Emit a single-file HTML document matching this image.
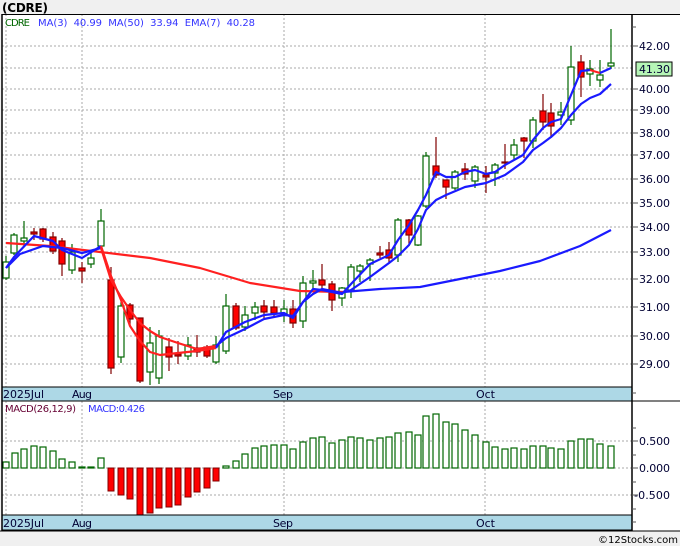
<!DOCTYPE html>
<html><head><meta charset="utf-8"><style>
body{margin:0;background:#f0f0f0;width:680px;height:546px;overflow:hidden;font-family:"DejaVu Sans","Liberation Sans",sans-serif}
svg{position:absolute;left:0;top:0}
</style></head><body>
<svg width="680" height="546" xmlns="http://www.w3.org/2000/svg" font-family="DejaVu Sans, Liberation Sans, sans-serif">
<rect x="0" y="0" width="680" height="546" fill="#f0f0f0"/>
<text x="2" y="12" font-size="12" font-weight="bold" fill="#000" textLength="46">(CDRE)</text>
<rect x="2" y="14" width="678" height="517" fill="#fff"/>
<g stroke="#aaa" stroke-dasharray="2,2" stroke-width="1">
<line x1="6" y1="14" x2="6" y2="387"/><line x1="82" y1="14" x2="82" y2="387"/><line x1="284" y1="14" x2="284" y2="387"/><line x1="485" y1="14" x2="485" y2="387"/>
<line x1="6" y1="401" x2="6" y2="515"/><line x1="82" y1="401" x2="82" y2="515"/><line x1="284" y1="401" x2="284" y2="515"/><line x1="485" y1="401" x2="485" y2="515"/>
<line x1="2" y1="46" x2="632" y2="46"/><line x1="2" y1="68" x2="632" y2="68"/><line x1="2" y1="89" x2="632" y2="89"/><line x1="2" y1="110" x2="632" y2="110"/><line x1="2" y1="133" x2="632" y2="133"/><line x1="2" y1="155" x2="632" y2="155"/><line x1="2" y1="179" x2="632" y2="179"/><line x1="2" y1="203" x2="632" y2="203"/><line x1="2" y1="227" x2="632" y2="227"/><line x1="2" y1="252" x2="632" y2="252"/><line x1="2" y1="279" x2="632" y2="279"/><line x1="2" y1="307" x2="632" y2="307"/><line x1="2" y1="336" x2="632" y2="336"/><line x1="2" y1="364" x2="632" y2="364"/>
<line x1="2" y1="441" x2="632" y2="441"/><line x1="2" y1="468" x2="632" y2="468"/><line x1="2" y1="495" x2="632" y2="495"/>
</g>
<text x="5" y="26" font-size="10" fill="#006600" textLength="25">CDRE</text>
<text x="38" y="26" font-size="10" fill="#3333ff" xml:space="preserve" textLength="217">MA(3)  40.99  MA(50)  33.94  EMA(7)  40.28</text>
<g stroke-width="1.2">
<g stroke="#006600" fill="#fff">
<line x1="6" y1="256" x2="6" y2="280"/><rect x="3" y="262" width="6" height="16"/>
<line x1="14" y1="233" x2="14" y2="255"/><rect x="11" y="235" width="6" height="18"/>
<line x1="24" y1="221" x2="24" y2="246"/><rect x="21" y="238" width="6" height="3"/>
<line x1="72" y1="244" x2="72" y2="274"/><rect x="69" y="252" width="6" height="18"/>
<line x1="91" y1="250" x2="91" y2="268"/><rect x="88" y="258" width="6" height="6"/>
<line x1="101" y1="209" x2="101" y2="248"/><rect x="98" y="221" width="6" height="25"/>
<line x1="121" y1="302" x2="121" y2="363"/><rect x="118" y="306" width="6" height="51"/>
<line x1="150" y1="327" x2="150" y2="385"/><rect x="147" y="343" width="6" height="29"/>
<line x1="159" y1="330" x2="159" y2="384"/><rect x="156" y="336" width="6" height="42"/>
<line x1="188" y1="337" x2="188" y2="360"/><rect x="185" y="345" width="6" height="11"/>
<line x1="216" y1="336" x2="216" y2="364"/><rect x="213" y="345" width="6" height="17"/>
<line x1="226" y1="294" x2="226" y2="354"/><rect x="223" y="306" width="6" height="45"/>
<line x1="245" y1="306" x2="245" y2="331"/><rect x="242" y="315" width="6" height="12"/>
<line x1="255" y1="302" x2="255" y2="320"/><rect x="252" y="307" width="6" height="6"/>
<line x1="284" y1="300" x2="284" y2="322"/><rect x="281" y="309" width="6" height="5"/>
<line x1="303" y1="276" x2="303" y2="328"/><rect x="300" y="283" width="6" height="38"/>
<line x1="313" y1="270" x2="313" y2="290"/><rect x="310" y="281" width="6" height="2"/>
<line x1="342" y1="287" x2="342" y2="306"/><rect x="339" y="288" width="6" height="10"/>
<line x1="351" y1="264" x2="351" y2="298"/><rect x="348" y="267" width="6" height="24"/>
<line x1="360" y1="264" x2="360" y2="282"/><rect x="357" y="266" width="6" height="5"/>
<line x1="370" y1="258" x2="370" y2="281"/><rect x="367" y="260" width="6" height="4"/>
<line x1="398" y1="218" x2="398" y2="262"/><rect x="395" y="220" width="6" height="35"/>
<line x1="418" y1="215" x2="418" y2="246"/><rect x="415" y="216" width="6" height="29"/>
<line x1="426" y1="152" x2="426" y2="208"/><rect x="423" y="156" width="6" height="50"/>
<line x1="455" y1="170" x2="455" y2="190"/><rect x="452" y="172" width="6" height="16"/>
<line x1="475" y1="165" x2="475" y2="188"/><rect x="472" y="167" width="6" height="14"/>
<line x1="495" y1="163" x2="495" y2="186"/><rect x="492" y="165" width="6" height="8"/>
<line x1="514" y1="139" x2="514" y2="160"/><rect x="511" y="145" width="6" height="10"/>
<line x1="533" y1="117" x2="533" y2="148"/><rect x="530" y="120" width="6" height="21"/>
<line x1="561" y1="102" x2="561" y2="125"/><rect x="558" y="112" width="6" height="3"/>
<line x1="571" y1="46" x2="571" y2="125"/><rect x="568" y="67" width="6" height="53"/>
<line x1="590" y1="60" x2="590" y2="86"/><rect x="587" y="69" width="6" height="5"/>
<line x1="600" y1="60" x2="600" y2="87"/><rect x="597" y="75" width="6" height="5"/>
<line x1="611" y1="29" x2="611" y2="69"/><rect x="608" y="63" width="6" height="3"/>
</g>
<g stroke="#800000" fill="#ff0000">
<line x1="34" y1="228" x2="34" y2="240"/><rect x="31" y="232" width="6" height="2"/>
<line x1="43" y1="228" x2="43" y2="242"/><rect x="40" y="229" width="6" height="10"/>
<line x1="53" y1="232" x2="53" y2="254"/><rect x="50" y="237" width="6" height="14"/>
<line x1="62" y1="238" x2="62" y2="276"/><rect x="59" y="241" width="6" height="23"/>
<line x1="82" y1="262" x2="82" y2="283"/><rect x="79" y="268" width="6" height="3"/>
<line x1="111" y1="267" x2="111" y2="374"/><rect x="108" y="280" width="6" height="88"/>
<line x1="130" y1="303" x2="130" y2="326"/><rect x="127" y="305" width="6" height="14"/>
<line x1="140" y1="318" x2="140" y2="383"/><rect x="137" y="318" width="6" height="63"/>
<line x1="169" y1="338" x2="169" y2="371"/><rect x="166" y="347" width="6" height="10"/>
<line x1="178" y1="341" x2="178" y2="364"/><rect x="175" y="354" width="6" height="2"/>
<line x1="197" y1="335" x2="197" y2="357"/><rect x="194" y="348" width="6" height="4"/>
<line x1="207" y1="345" x2="207" y2="358"/><rect x="204" y="347" width="6" height="9"/>
<line x1="236" y1="303" x2="236" y2="330"/><rect x="233" y="306" width="6" height="22"/>
<line x1="264" y1="300" x2="264" y2="318"/><rect x="261" y="306" width="6" height="6"/>
<line x1="274" y1="300" x2="274" y2="318"/><rect x="271" y="307" width="6" height="6"/>
<line x1="293" y1="300" x2="293" y2="328"/><rect x="290" y="309" width="6" height="14"/>
<line x1="322" y1="264" x2="322" y2="292"/><rect x="319" y="280" width="6" height="5"/>
<line x1="332" y1="281" x2="332" y2="311"/><rect x="329" y="284" width="6" height="16"/>
<line x1="380" y1="246" x2="380" y2="258"/><rect x="377" y="253" width="6" height="2"/>
<line x1="389" y1="242" x2="389" y2="262"/><rect x="386" y="250" width="6" height="8"/>
<line x1="409" y1="219" x2="409" y2="246"/><rect x="406" y="220" width="6" height="15"/>
<line x1="436" y1="137" x2="436" y2="178"/><rect x="433" y="166" width="6" height="9"/>
<line x1="446" y1="180" x2="446" y2="199"/><rect x="443" y="180" width="6" height="7"/>
<line x1="465" y1="163" x2="465" y2="180"/><rect x="462" y="169" width="6" height="5"/>
<line x1="486" y1="166" x2="486" y2="193"/><rect x="483" y="175" width="6" height="2"/>
<line x1="505" y1="144" x2="505" y2="169"/><rect x="502" y="162" width="6" height="1"/>
<line x1="524" y1="137" x2="524" y2="158"/><rect x="521" y="138" width="6" height="3"/>
<line x1="543" y1="94" x2="543" y2="130"/><rect x="540" y="111" width="6" height="11"/>
<line x1="551" y1="103" x2="551" y2="138"/><rect x="548" y="113" width="6" height="13"/>
<line x1="581" y1="55" x2="581" y2="97"/><rect x="578" y="62" width="6" height="15"/>
</g>
</g>
<g fill="none" stroke-width="2.2" stroke-linejoin="round">
<polyline stroke="#ff2020" points="6,243 50,246 100,252 150,258 200,268 250,283 300,291 343,292"/>
<polyline stroke="#1a1aff" points="343,292 380,289 420,287 460,279 500,271 540,261 580,246 611,230"/>
<polyline stroke="#1a1aff" points="6,268 20,254 43,246 62,248 82,253 101,248"/>
<polyline stroke="#ff2020" points="101,248 111,280 121,297 130,310 140,323 150,331 160,337 178,343 197,349 216,346"/>
<polyline stroke="#1a1aff" points="216,346 226,338 245,329 264,319 284,315 293,316 303,302 313,294 322,289 342,293 351,290 370,277 389,263 398,256 409,245 418,229 426,210 436,200 446,195 465,187 486,183 505,175 523,162 533,150 543,143 551,137 561,128 571,115 581,104 590,98 600,94 611,84"/>
<polyline stroke="#1a1aff" points="6,268 14,257 34,236 53,241 62,250 82,258 101,246"/>
<polyline stroke="#ff2020" points="101,246 111,276 121,300 130,326 140,341 150,352 160,355 178,353 197,351 216,348"/>
<polyline stroke="#1a1aff" points="216,348 226,332 245,322 264,315 284,313 293,318 303,302 313,289 322,290 342,294 351,284 370,264 389,255 398,240 409,225 418,210 426,195 436,172 446,177 455,177 465,172 475,170 486,174 495,172 505,165 523,155 533,140 543,128 551,122 561,119 571,95 581,71 590,70"/>
<polyline stroke="#ff2020" points="590,70 600,73"/>
<polyline stroke="#1a1aff" points="600,73 611,68"/>
</g>
<g stroke="#006600" fill="#fff" stroke-width="1.2">
<rect x="3" y="462" width="6" height="6"/><rect x="12" y="453" width="6" height="15"/><rect x="21" y="449" width="6" height="19"/><rect x="31" y="446" width="6" height="22"/><rect x="40" y="447" width="6" height="21"/><rect x="50" y="451" width="6" height="17"/><rect x="59" y="459" width="6" height="9"/><rect x="69" y="462" width="6" height="6"/><rect x="79" y="467" width="6" height="1"/><rect x="88" y="467" width="6" height="1"/><rect x="98" y="458" width="6" height="10"/>
<rect x="223" y="466" width="6" height="2"/><rect x="233" y="461" width="6" height="7"/><rect x="242" y="454" width="6" height="14"/><rect x="252" y="448" width="6" height="20"/><rect x="261" y="446" width="6" height="22"/><rect x="271" y="445" width="6" height="23"/><rect x="281" y="445" width="6" height="23"/><rect x="290" y="449" width="6" height="19"/><rect x="300" y="442" width="6" height="26"/><rect x="310" y="438" width="6" height="30"/><rect x="319" y="437" width="6" height="31"/><rect x="329" y="443" width="6" height="25"/><rect x="339" y="440" width="6" height="28"/><rect x="348" y="437" width="6" height="31"/><rect x="357" y="438" width="6" height="30"/><rect x="367" y="440" width="6" height="28"/><rect x="377" y="438" width="6" height="30"/><rect x="386" y="437" width="6" height="31"/><rect x="395" y="433" width="6" height="35"/><rect x="406" y="432" width="6" height="36"/><rect x="415" y="435" width="6" height="33"/><rect x="423" y="416" width="6" height="52"/><rect x="433" y="414" width="6" height="54"/><rect x="443" y="422" width="6" height="46"/><rect x="452" y="424" width="6" height="44"/><rect x="462" y="430" width="6" height="38"/><rect x="472" y="435" width="6" height="33"/><rect x="483" y="442" width="6" height="26"/><rect x="492" y="447" width="6" height="21"/><rect x="502" y="449" width="6" height="19"/><rect x="511" y="448" width="6" height="20"/><rect x="521" y="449" width="6" height="19"/><rect x="530" y="446" width="6" height="22"/><rect x="540" y="446" width="6" height="22"/><rect x="548" y="448" width="6" height="20"/><rect x="558" y="449" width="6" height="19"/><rect x="568" y="441" width="6" height="27"/><rect x="578" y="439" width="6" height="29"/><rect x="587" y="439" width="6" height="29"/><rect x="597" y="444" width="6" height="24"/><rect x="608" y="446" width="6" height="22"/>
</g>
<g stroke="#800000" fill="#ff0000" stroke-width="1">
<rect x="108" y="468" width="6" height="23"/><rect x="118" y="468" width="6" height="27"/><rect x="127" y="468" width="6" height="31"/><rect x="137" y="468" width="6" height="47"/><rect x="147" y="468" width="6" height="45"/><rect x="156" y="468" width="6" height="40"/><rect x="166" y="468" width="6" height="39"/><rect x="175" y="468" width="6" height="37"/><rect x="185" y="468" width="6" height="29"/><rect x="194" y="468" width="6" height="24"/><rect x="204" y="468" width="6" height="20"/><rect x="213" y="468" width="6" height="13"/>
</g>
<text x="5" y="412" font-size="10" fill="#660033" textLength="71">MACD(26,12,9)</text>
<text x="88" y="412" font-size="10" fill="#3333ff" textLength="57">MACD:0.426</text>
<rect x="2" y="387" width="630" height="14" fill="#add8e6" stroke="#000"/>
<rect x="2" y="515" width="630" height="15" fill="#add8e6" stroke="#000"/>
<g font-size="11" fill="#000033">
<text x="3" y="398" textLength="41">2025Jul</text><text x="72" y="398" textLength="20">Aug</text><text x="273" y="398" textLength="20">Sep</text><text x="476" y="398" textLength="19">Oct</text>
<text x="3" y="527" textLength="41">2025Jul</text><text x="72" y="527" textLength="20">Aug</text><text x="273" y="527" textLength="20">Sep</text><text x="476" y="527" textLength="19">Oct</text>
</g>
<line x1="2" y1="14" x2="2" y2="531" stroke="#000" stroke-width="1.5"/>
<line x1="2" y1="14.5" x2="680" y2="14.5" stroke="#000"/>
<line x1="632" y1="14" x2="632" y2="531" stroke="#000" stroke-width="1.5"/>
<line x1="2" y1="401" x2="680" y2="401" stroke="#000"/>
<line x1="0" y1="531" x2="680" y2="531" stroke="#000"/>
<g stroke="#555" stroke-width="1">
<line x1="632" y1="46" x2="638" y2="46"/><line x1="632" y1="89" x2="638" y2="89"/><line x1="632" y1="110" x2="638" y2="110"/><line x1="632" y1="133" x2="638" y2="133"/><line x1="632" y1="155" x2="638" y2="155"/><line x1="632" y1="179" x2="638" y2="179"/><line x1="632" y1="203" x2="638" y2="203"/><line x1="632" y1="227" x2="638" y2="227"/><line x1="632" y1="252" x2="638" y2="252"/><line x1="632" y1="279" x2="638" y2="279"/><line x1="632" y1="307" x2="638" y2="307"/><line x1="632" y1="336" x2="638" y2="336"/><line x1="632" y1="364" x2="638" y2="364"/><line x1="632" y1="27" x2="636" y2="27"/><line x1="632" y1="393" x2="636" y2="393"/>
<line x1="632" y1="441" x2="638" y2="441"/><line x1="632" y1="468" x2="638" y2="468"/><line x1="632" y1="495" x2="638" y2="495"/><line x1="632" y1="428" x2="636" y2="428"/><line x1="632" y1="455" x2="636" y2="455"/><line x1="632" y1="482" x2="636" y2="482"/><line x1="632" y1="509" x2="636" y2="509"/><line x1="632" y1="522" x2="636" y2="522"/>
</g>
<g font-size="11" fill="#000033">
<text x="639" y="50" textLength="31">42.00</text><text x="639" y="93" textLength="31">40.00</text><text x="639" y="114" textLength="31">39.00</text><text x="639" y="137" textLength="31">38.00</text><text x="639" y="159" textLength="31">37.00</text><text x="639" y="183" textLength="31">36.00</text><text x="639" y="207" textLength="31">35.00</text><text x="639" y="231" textLength="31">34.00</text><text x="639" y="256" textLength="31">33.00</text><text x="639" y="283" textLength="31">32.00</text><text x="639" y="311" textLength="31">31.00</text><text x="639" y="340" textLength="31">30.00</text><text x="639" y="368" textLength="31">29.00</text>
<text x="639" y="445" textLength="31">0.500</text><text x="639" y="472" textLength="31">0.000</text><text x="634" y="499" textLength="36">-0.500</text>
</g>
<rect x="636" y="62" width="36" height="14" fill="#b6f5b6" stroke="#000"/>
<text x="639" y="73" font-size="11" fill="#000033" textLength="31">41.30</text>
<text x="598" y="543" font-size="10" fill="#000" textLength="80">©12Stocks.com</text>
</svg>
</body></html>
